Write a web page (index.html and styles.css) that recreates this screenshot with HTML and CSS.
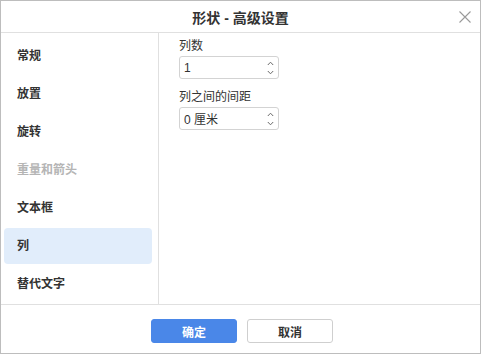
FILE: index.html
```html
<html>
	<head>
		<meta charset="utf-8">
		<title>形状 - 高级设置</title>
		<link rel="stylesheet" href="styles.css">
	</head>
	<body>
		<div class="dlg">
			<div class="dlg-header">
				<div class="dlg-title">形状 - 高级设置</div>
				<svg class="dlg-close" width="12" height="12" viewBox="0 0 12 12">
					<path d="M0.5 0.5 L11.5 11.5 M11.5 0.5 L0.5 11.5" stroke="#9a9a9a" stroke-width="1.1" fill="none"/>
				</svg>
			</div>
			<div class="dlg-main">
				<div class="side">
					<div class="side-item">常规</div>
					<div class="side-item">放置</div>
					<div class="side-item">旋转</div>
					<div class="side-item disabled">重量和箭头</div>
					<div class="side-item">文本框</div>
					<div class="side-item active">列</div>
					<div class="side-item">替代文字</div>
				</div>
				<div class="content">
					<div class="field">
						<div class="field-label">列数</div>
						<div class="spin">
							<span class="spin-value">1</span>
							<span class="spin-btns">
								<svg width="7" height="5" viewBox="0 0 7 5"><path d="M0.8 4 L3.5 1.2 L6.2 4" stroke="#6a6a6a" stroke-width="1" fill="none"/></svg>
								<svg width="7" height="5" viewBox="0 0 7 5"><path d="M0.8 1 L3.5 3.8 L6.2 1" stroke="#6a6a6a" stroke-width="1" fill="none"/></svg>
							</span>
						</div>
					</div>
					<div class="field">
						<div class="field-label">列之间的间距</div>
						<div class="spin">
							<span class="spin-value">0 厘米</span>
							<span class="spin-btns">
								<svg width="7" height="5" viewBox="0 0 7 5"><path d="M0.8 4 L3.5 1.2 L6.2 4" stroke="#6a6a6a" stroke-width="1" fill="none"/></svg>
								<svg width="7" height="5" viewBox="0 0 7 5"><path d="M0.8 1 L3.5 3.8 L6.2 1" stroke="#6a6a6a" stroke-width="1" fill="none"/></svg>
							</span>
						</div>
					</div>
				</div>
			</div>
			<div class="dlg-footer">
				<button class="btn btn-primary" type="button">确定</button>
				<button class="btn" type="button">取消</button>
			</div>
		</div>
	</body>
</html>
```

FILE: styles.css
```css
html, body
{
	margin: 0px;
	padding: 0px;
	background-color: #FFFFFF;
}

body
{
	font-family: "Liberation Sans", "Noto Sans CJK SC", sans-serif;
	font-size: 12px;
	color: #333333;
}

.dlg
{
	box-sizing: border-box;
	width: 481px;
	height: 354px;
	border: 1px solid #BDBDBD;
	display: flex;
	flex-direction: column;
	background-color: #FFFFFF;
}

.dlg-header
{
	position: relative;
	height: 31px;
	flex: none;
	border-bottom: 1px solid #E0E0E0;
	display: flex;
	align-items: center;
	justify-content: center;
}

.dlg-title
{
	font-size: 14px;
	font-weight: bold;
	color: #333333;
}

.dlg-close
{
	position: absolute;
	right: 9px;
	top: 10px;
}

.dlg-main
{
	flex: 1;
	display: flex;
	min-height: 0;
}

.side
{
	width: 158px;
	flex: none;
	border-right: 1px solid #E0E0E0;
	padding: 5px 0px 0px 3px;
	box-sizing: border-box;
	display: flex;
	flex-direction: column;
	gap: 2px;
}

.side-item
{
	width: 148px;
	height: 36px;
	line-height: 36px;
	padding-left: 13px;
	box-sizing: border-box;
	font-weight: bold;
	color: #333333;
	border-radius: 4px;
}

.side-item.disabled
{
	color: #B5B5B5;
}

.side-item.active
{
	background-color: #E1EDFB;
}

.content
{
	flex: 1;
	padding: 5px 0px 0px 20px;
	display: flex;
	flex-direction: column;
	gap: 10px;
}

.field-label
{
	line-height: 16px;
	margin-bottom: 2px;
}

.spin
{
	box-sizing: border-box;
	width: 100px;
	height: 23px;
	border: 1px solid #D3D3D3;
	border-radius: 3px;
	display: flex;
	align-items: center;
	justify-content: space-between;
	padding: 0px 4px 0px 4px;
}

.spin-btns
{
	display: flex;
	flex-direction: column;
	gap: 4px;
}

.spin-btns svg
{
	display: block;
}

.dlg-footer
{
	height: 49px;
	flex: none;
	border-top: 1px solid #E0E0E0;
	display: flex;
	justify-content: center;
	align-items: flex-start;
	gap: 10px;
	padding-top: 14px;
	box-sizing: border-box;
	padding-left: 3px;
}

.btn
{
	width: 86px;
	height: 24px;
	border: 1px solid #CFCFCF;
	border-radius: 3px;
	background-color: #FFFFFF;
	color: #333333;
	font-family: "Liberation Sans", "Noto Sans CJK SC", sans-serif;
	font-size: 12px;
	font-weight: bold;
	padding: 0px;
	cursor: pointer;
}

.btn-primary
{
	background-color: #4A87E8;
	border-color: #4A87E8;
	color: #FFFFFF;
}
```
